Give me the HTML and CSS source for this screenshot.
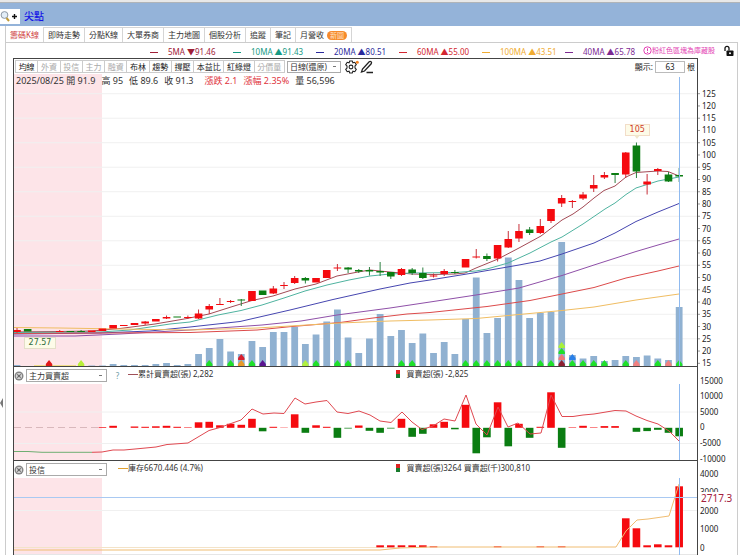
FILE: index.html
```html
<!DOCTYPE html>
<html lang="zh-Hant">
<head>
    <meta charset="UTF-8">
    <meta name="viewport" content="width=device-width, initial-scale=1.0">
    <title>尖點 籌碼K線</title>
    <link rel="stylesheet" href="styles.css">
</head>
<body>
    <header class="title-bar">
        <button class="search-btn" type="button" aria-label="搜尋">
            <svg width="20" height="15" viewBox="0 0 20 15">
                <circle cx="4.5" cy="6" r="3.4" fill="#e3eef8" stroke="#8d98a5"/>
                <path d="M6.5 9l2.5 3" stroke="#c09a35" stroke-width="2"/>
                <path d="M12 7.5h5M14.500 5v5" stroke="#111" stroke-width="1.4"/>
            </svg>
        </button>
        <h1>尖點</h1>
    </header>

    <div class="main">
        <button class="side-handle" type="button" aria-label="展開側欄"></button>
        <div class="content">
            <nav class="tabs">
                <a href="#" class="active">籌碼K線</a>
                <a href="#">即時走勢</a>
                <a href="#">分點K線</a>
                <a href="#">大單券商</a>
                <a href="#">主力地圖</a>
                <a href="#">個股分析</a>
                <a href="#">追蹤</a>
                <a href="#">筆記</a>
                <a href="#">月營收<span class="badge">新圖</span></a>
            </nav>

            <div class="workspace">
                <div class="ma-row">
                    <div class="ma-list">
                        <span class="ma ma5"><i></i>5MA ▼91.46</span>
                        <span class="ma ma10"><i></i>10MA ▲91.43</span>
                        <span class="ma ma20"><i></i>20MA ▲80.51</span>
                        <span class="ma ma60"><i></i>60MA ▲55.00</span>
                        <span class="ma ma100"><i></i>100MA ▲43.51</span>
                        <span class="ma ma40"><i></i>40MA ▲65.78</span>
                    </div>
                    <span class="note">
                        <svg width="9" height="9" viewBox="0 0 9 9"><circle cx="4.500" cy="4.500" r="3.7" fill="none" stroke="#e33fb4"/><path d="M4.500 2.300v2.700M4.500 6v1" stroke="#e33fb4"/></svg>粉紅色區塊為庫藏股
                    </span>
                    <button class="lock" type="button" aria-label="鎖定">
                        <svg width="11" height="12" viewBox="0 0 11 12"><path d="M2 6V3.300a2 2 0 0 1 4 0V5.500" fill="none" stroke="#111" stroke-width="1.300"/><rect x="3.500" y="5.500" width="7" height="5.500" rx=".8" fill="#111"/><circle cx="7" cy="8.200" r="1" fill="#fff"/></svg>
                    </button>
                </div>

                <section class="panel price">
                    <div class="plot">
                        <svg id="priceChart" class="chart" viewBox="14 59 683 307" preserveAspectRatio="none"></svg>
                        <div class="overlay">
                            <div class="toolbar">
                                <div class="tools">
                                    <button type="button">均線</button>
                                    <button type="button" class="off">外資</button>
                                    <button type="button" class="off">投信</button>
                                    <button type="button" class="off">主力</button>
                                    <button type="button" class="off">融資</button>
                                    <button type="button">布林</button>
                                    <button type="button">趨勢</button>
                                    <button type="button">撐壓</button>
                                    <button type="button">本益比</button>
                                    <button type="button">紅綠燈</button>
                                    <button type="button" class="off">分價量</button>
                                </div>
                                <select class="period" aria-label="週期"><option>日線(還原)</option></select>
                                <button class="icon-btn" type="button" aria-label="設定">
                                    <svg width="15" height="14" viewBox="0 0 15 14">
                                        <path d="M5.700 1h2.600l.6 1.800 1.900-.5 1.500 2.300-1.300 1.400v2l1.300 1.400-1.500 2.300-1.900-.5-.6 1.800H5.700l-.6-1.800-1.900.5-1.500-2.300L3 8V6L1.700 4.600l1.500-2.300 1.900.5z" fill="none" stroke="#222" stroke-width="1.100"/>
                                        <circle cx="7" cy="7" r="1.900" fill="none" stroke="#222" stroke-width="1.100"/>
                                        <circle cx="13.300" cy="2.300" r="1.500" fill="#f58220"/>
                                    </svg>
                                </button>
                                <button class="icon-btn" type="button" aria-label="畫線">
                                    <svg width="14" height="14" viewBox="0 0 14 14"><path d="M1.500 12l1-3 6.700-7.200q1-.8 1.900 0t.1 2L4.500 11zM6.500 12.500H13" fill="none" stroke="#222" stroke-width="1.300"/></svg>
                                </button>
                                <label class="count">顯示:<input type="text" value="63">根</label>
                            </div>
                            <p class="quote">
                                <span>2025/08/25 開 91.9</span><span>高 95</span><span>低 89.6</span><span>收 91.3</span>
                                <span class="up gap">漲跌 2.1</span><span class="up">漲幅 2.35%</span><span>量 56,596</span>
                            </p>
                        </div>
                        <span class="tip tip-low">27.57</span>
                        <span class="tip tip-high">105</span>
                    </div>
                    <svg id="priceAxis" class="axis" width="39" height="307" viewBox="698 59 39 307"></svg>
                </section>

                <section class="panel flow">
                    <div class="plot">
                        <svg id="flowChart" class="chart" viewBox="14 367 683 93" preserveAspectRatio="none"></svg>
                        <div class="overlay panel-head">
                            <div class="head-left">
                                <button class="close" type="button" aria-label="關閉"><svg width="10" height="10" viewBox="0 0 10 10"><circle cx="5" cy="5" r="4.500" fill="#858585"/><circle cx="5" cy="5" r="3" fill="#ddd"/><path d="M3.300 3.300l3.400 3.400M6.700 3.300L3.300 6.700" stroke="#666" stroke-width="1.200"/></svg></button>
                                <select aria-label="指標"><option>主力買賣超</option></select>
                                <a href="#" class="help">?</a>
                                <span class="legend"><i class="line red"></i>累計買賣超(張) 2,282</span>
                            </div>
                            <span class="legend"><i class="box"></i>買賣超(張) -2,825</span>
                        </div>
                    </div>
                    <svg id="flowAxis" class="axis" width="39" height="93" viewBox="698 367 39 93"></svg>
                </section>

                <section class="panel trust">
                    <div class="plot">
                        <svg id="trustChart" class="chart" viewBox="14 461 683 94" preserveAspectRatio="none"></svg>
                        <div class="overlay panel-head">
                            <div class="head-left">
                                <button class="close" type="button" aria-label="關閉"><svg width="10" height="10" viewBox="0 0 10 10"><circle cx="5" cy="5" r="4.500" fill="#858585"/><circle cx="5" cy="5" r="3" fill="#ddd"/><path d="M3.300 3.300l3.400 3.400M6.700 3.300L3.300 6.700" stroke="#666" stroke-width="1.200"/></svg></button>
                                <select aria-label="指標"><option>投信</option></select>
                                <span class="legend"><i class="line orange"></i>庫存6670.446 (4.7%)</span>
                            </div>
                            <span class="legend"><i class="box"></i>買賣超(張)3264 買賣超(千)300,810</span>
                        </div>
                    </div>
                    <svg id="trustAxis" class="axis" width="39" height="94" viewBox="698 461 39 94"></svg>
                </section>
            </div>
        </div>
    </div>

    <script src="chart.js"></script>
</body>
</html>
```

FILE: styles.css
```css
* {
    box-sizing: border-box;
}
body {
    margin: 0;
    background: #fff;
    color: #333;
    font-family: "Noto Sans", "Noto Sans CJK TC", sans-serif;
    font-size: 8px;
    line-height: 12px;
}
button, select, input {
    font: inherit;
    color: inherit;
    margin: 0;
    padding: 0;
    border: 0;
    background: none;
    border-radius: 0;
}
svg {
    display: block;
}
a {
    color: inherit;
    text-decoration: none;
}

/* title */
.title-bar {
    display: flex;
    align-items: center;
    height: 26px;
    padding-top: 4px;
    background: #94b3d9;
    border-top: 2px solid #e8e8e8;
    box-shadow: inset 0 1px 0 #b0b4b8;
}
.search-btn {
    background: #fff;
}
.title-bar h1 {
    margin: 0 0 0 4px;
    font-size: 10px;
    line-height: 14px;
    font-weight: 500;
    color: #1212e6;
}

/* frame */
.main {
    display: flex;
}
.side-handle {
    flex: 0 0 5px;
    display: flex;
    align-items: center;
    padding-top: 225px;
}
.side-handle::before {
    content: "";
    border: 5px solid transparent;
    border-left: 0;
    border-right: 3px solid #777;
}
.content {
    flex: 1;
    min-width: 0;
    margin-right: 2px;
}
.tabs {
    display: flex;
    height: 16px;
    border-left: 1px solid #ccc;
}
.tabs a {
    display: flex;
    align-items: center;
    gap: 3px;
    padding: 0 4px;
    margin-top: 1px;
    border: 1px solid #d5d5d5;
    border-width: 1px 1px 0 0;
}
.tabs .active {
    color: #cf4444;
    border-top: 0;
}
.badge {
    padding: 0 3px;
    border-radius: 5px;
    background: #f68a2c;
    color: #ffe3c4;
    font-size: 7px;
    line-height: 9px;
}
.workspace {
    border: 1px solid #ccc;
    border-bottom: 0;
    padding-left: 7px;
}

/* moving averages */
.ma-row {
    display: flex;
    align-items: center;
    height: 15px;
    padding-right: 3px;
}
.ma-list {
    flex: 1;
    display: flex;
    justify-content: flex-end;
}
.ma {
    flex: 0 0 83px;
    display: flex;
    align-items: center;
    gap: 10px;
    padding-top: 3px;
    white-space: nowrap;
}
.ma:last-child {
    flex-basis: 78px;
}
.ma i {
    width: 8px;
    border-top: 1px solid;
}
.ma5 { color: #a02037; }
.ma10 { color: #169a84; }
.ma20 { color: #2a2a9c; }
.ma60 { color: #d22630; }
.ma100 { color: #f0ac32; }
.ma40 { color: #7d2a92; }
.note {
    display: flex;
    align-items: center;
    font-size: 7px;
    color: #e33fb4;
}
.lock {
    margin-left: 8px;
}

/* panels */
.panel {
    display: flex;
}
.plot {
    position: relative;
    flex: 1;
    min-width: 0;
    display: grid;
    border: 1px solid #444;
    border-top: 0;
}
.price .plot {
    border-top: 1px solid #444;
}
.price .axis {
    margin-top: 1px;
}
.trust .plot {
    border-bottom: 0;
}
.chart, .overlay {
    grid-area: 1 / 1;
}
.chart {
    width: 100%;
}
.price .chart { height: 307px; }
.flow .chart { height: 93px; }
.trust .chart { height: 94px; }
.overlay {
    align-self: start;
    z-index: 1;
}
.axis {
    flex: none;
    overflow: visible;
    font-size: 8px;
    fill: #222;
}
.axis .cursor {
    font-size: 10px;
    fill: #a3203c;
}

/* toolbar */
.toolbar {
    display: flex;
    align-items: center;
    height: 15px;
    padding-left: 1px;
    background: #fff;
}
.tools {
    display: flex;
    flex: 0 0 270px;
    border-left: 1px solid #ccc;
}
.tools button {
    flex: 1 1 auto;
    border: 1px solid #ccc;
    border-left: 0;
    line-height: 11px;
    color: #222;
    white-space: nowrap;
}
.tools .off {
    color: #aaa;
}
select {
    appearance: none;
    height: 13px;
    padding: 0 12px 0 2px;
    border: 1px solid #aaa;
    background: linear-gradient(#777, #777) no-repeat right 4px center / 3px 1px, #fff;
}
.period {
    width: 54px;
    height: 12px;
    line-height: 10px;
    margin: 0 3px 0 2px;
}
.icon-btn {
    margin-right: 1px;
}
.count {
    display: flex;
    align-items: center;
    gap: 2px;
    margin-left: auto;
    padding-right: 2px;
    color: #222;
}
.count input {
    width: 30px;
    height: 12px;
    border: 1px solid #bbb;
    text-align: center;
}
.quote {
    display: flex;
    gap: 6px;
    margin: 0;
    padding-left: 2px;
    font-size: 9px;
    line-height: 14px;
}
.quote .gap {
    margin-left: 5px;
}
.up {
    color: #e0343c;
}

/* price tips */
.tip {
    position: absolute;
    padding: 0 4px;
    border: 1px solid #e4dfc8;
    background: #fdfbe8;
    font-family: "DejaVu Sans", sans-serif;
    font-size: 8px;
    line-height: 10px;
}
.tip-low {
    left: 1.4%;
    bottom: 17px;
    color: #2f6b3a;
}
.tip-high {
    left: 89.4%;
    top: 65px;
    color: #cf3a2c;
    border-color: #f2ddc8;
}
.tip-high::after {
    content: "";
    position: absolute;
    top: 100%;
    left: 50%;
    margin-left: -3px;
    border: 3px solid transparent;
    border-top: 4px solid #f0e6cc;
    border-bottom: 0;
}

/* indicator headers */
.panel-head {
    display: flex;
    align-items: center;
    width: 100%;
    height: 17px;
    background: #fff;
}
.head-left {
    flex: 0 0 56%;
    display: flex;
    align-items: center;
}
.close {
    margin: 0 2px 0 0;
}
.head-left select {
    width: 81px;
}
.help {
    width: 21px;
    text-align: center;
    color: #6b9aa5;
}
.legend {
    display: flex;
    align-items: center;
    padding-bottom: 3px;
    white-space: nowrap;
    line-height: 12px;
}
.trust .head-left .legend {
    margin-left: 11px;
}
.line {
    width: 10px;
    border-top: 1px solid #a05058;
}
.line.orange {
    border-color: #e0a030;
}
.box {
    width: 4px;
    height: 8px;
    margin-right: 6px;
    background: linear-gradient(#d22 50%, #187a2c 50%);
}
```

FILE: chart.js
```js
const RED = "#f50a0f";
const GREEN = "#0b7d12";
const CURSOR = "#8fbaf0";
const STEP = 10.68;
const xAt = i => 17 + i * STEP;

// color, body top, body bottom, wick top, wick bottom
const candles = [
    "r 330 332 328 333", "g 329 331.5", "", "", "r 331 332 330 332", "g 331 332", "g 331 332 330 332",
    "r 330.5 332", "r 328.5 331", "r 325 328.5", "r 325 326", "r 323 325", "r 321.5 323.5 321 325",
    "r 319 321.5", "r 317 318.5 315.5 319", "g 316.5 317.5", "r 317 318 315.5 319", "r 313.5 318.5 309.5 319",
    "r 306 309.5 304 314", "r 304 305 298 305", "r 301 302 300 303", "g 299.5 300.5 299 306", "r 291 301",
    "g 290.5 295", "r 288.5 293.5 286 294", "r 285 286 282 289", "r 278 283 276 284", "g 278 280.5 277 283.5",
    "r 278 282.5", "r 270 278", "r 267.5 268.5 264 271", "g 267.5 269.5 267 273", "g 270 271.5 269 273",
    "g 270 271.5 267 275.5", "g 271 272.5 262 276", "g 272 276.5 272 279", "r 269 275 268 276",
    "g 269.5 273 268 275", "g 273 278 267.5 279", "r 275.5 276.5 273.5 277.5", "r 271 274 269 276",
    "g 272 273 270 274", "r 259 267.5", "r 256.5 257.5 249 258.5", "g 256 259 253.5 261",
    "r 245 258.5 245 261.5", "r 239 247.5 231 248", "r 231 238.5 224 242", "g 229.5 233 227 235",
    "r 226 233 219 234", "r 209 221 209 223", "r 198 203.5 195 207", "r 201 202 200 208",
    "r 194.5 198.5 192 200", "r 185 188.5 175 192", "r 175 177.5 172 179", "g 173 175 173 183",
    "r 152.5 174.5 152 178", "g 145.5 171.5 142.5 178", "r 181.5 184.5 174 194.5", "r 169 171 168 175",
    "g 174.5 181.5 172 182", "g 175 176.5 168 182"
];

const volume = [1, 0, 0, 0, 0, 0, 0, 0.5, 0.5, 2, 1, 1, 1, 2, 3, 1, 2, 12, 18, 27, 14.5, 12, 25, 19, 34, 34, 39,
    22, 31.5, 44.5, 56.5, 28.5, 13, 27.5, 52, 30, 36, 23, 32.5, 13, 24, 12, 47, 88.5, 33, 48, 108.5, 86, 48,
    53, 54, 124, 11, 7.5, 10, 5, 6, 10, 9, 10.5, 7.5, 6, 59];

const averages = {
    "#a34a55": "14,332 60,331.5 92,331 120,328.5 155,324 187,318.5 209,314 231,307 252,300.5 273,296 295,289 316,284 337,276 358,272 370,270 390,272 412,274 433,274.5 455,274 465,273 476,268 498,259 519,248 541,236 562,220 573,214 583,207 594,198 604,190.5 615,186 626,177 636,172.5 658,171 668,171.5 679,176",
    "#4fb3a0": "14,332.5 100,332 130,330 170,324 190,322 218,315 241,310.5 262,305 284,298 305,291 327,285 349,280 370,276 390,274 412,273 455,272.5 476,271 487,269 508,263 530,253 551,242 562,237 583,224 605,209 615,203 626,194.5 636,188 658,181 679,177",
    "#4646b0": "14,334 100,333 150,331 190,327 240,321.500 290,310 333,299.500 380,289 410,283 430,280 473,273 519,265 540,261 562,254 594,243 615,233 636,221.5 658,212 679,203.5",
    "#8f50a8": "14,336 75,336 120,334 190,330 262,325 301,321 337,315 390,308 430,302 476,295 519,288 562,275.5 594,265 636,251.5 658,245 679,239",
    "#dc4a4a": "14,333.5 190,332.5 257,330 290,326.700 340,322.500 373,318 407,314 430,312.5 487,306.5 530,300.5 562,294 594,287.5 626,278 658,271 679,266",
    "#f0bd62": "14,327.5 60,328 120,329 190,330 257,328 290,326 340,323 390,321 430,320 476,318.5 519,314.5 562,310.5 594,307 636,300 679,294"
};

// signal marks under the bars: index, level, colour
const marks = [[3, 0, "#e01818"], [6, 0, "#b8ee38"], [21, 1, "#d81e2c"], [21, 0, "#e89a28"], [23, 0, "#5a1590"],
    [27, 0, "#b0f040"], [51, 3, "#a8f03a"], [51, 2, "#1fe02a"], [51, 1, "#f07878"], [51, 0, "#8c2030"],
    [52, 1, "#2a80e8"], [58, 0, "#f08080"], [61, 0, "#f08080"]];
[18, 20, 22, 28, 30, 31, 36, 37, 42, 43, 44, 45, 46, 47, 49, 50, 52, 53, 54, 55, 57, 60, 62]
    .forEach(i => marks.push([i, 0, "#1fe02a"]));

const flow = [0, 0, 0, 0, 0, 0, 0, 0, .7, 2, 0, 1.3, 1, 1.5, 2, 1, .5, 5.5, 6, 2.5, 4, 3, 9, -3.5, 1, .3, 13.5, -5,
    2.5, 1, -10, -.7, 2.3, -3, -5, -.7, 9, -9, -6, 3.5, 6, -1.5, 23, -25.5, -9.5, 25.5, -18.5, 4, -10, 1, 35.5,
    -20, .5, 2, .5, 1.7, 1.7, 0, -4, -3.3, -2, -5, -8.5];
const flowLine = "92,452.3 102,452 113,450 124,450 135,449 156,447 167,444.5 188,443 209,430.5 220,427.5 231,423.5 241,420 252,409 263,414 274,413 284,413.5 295,398 305,404 316,402 327,400.5 337,412 348,413.5 359,411 370,415 380,421 391,422.5 402,412 412,422 422,429.5 433,426 444,419 455,421 466,395 476,424 487,435 498,407 508,427 518,423 530,434 541,433 551,395 562,416.5 573,416.5 583,415 594,414 615,410.5 626,411 636,416 647,420.5 658,424 669,431 679,441";

const trust = { 34: 2, 35: 2, 36: 2, 37: 2, 38: 2, 39: 1, 45: 1, 49: 1, 51: 1, 57: 29, 58: 19, 59: 2, 60: 3, 61: 2, 62: 61 };
const trustLine = "14,550 380,550 400,548 430,547 616,547 626,531 637,520 648,519 669,516 679,484";

const rect = (x, y, w, h, fill) => `<rect x="${x}" y="${y}" width="${w}" height="${h}" fill="${fill}"/>`;
const line = (x1, y1, x2, y2, color) => `<path d="M${x1} ${y1}L${x2} ${y2}" stroke="${color}"/>`;
const poly = (points, color) => `<polyline points="${points}" fill="none" stroke="${color}"/>`;
const draw = (id, html) => document.getElementById(id).innerHTML = html;

function bar(i, h, zero) {
    return h ? rect(xAt(i) - 3.8, h > 0 ? zero - h : zero, 7.6, Math.abs(h), h > 0 ? RED : GREEN) : "";
}

function drawPrice() {
    const yAt = p => 93.7 + (125 - p) * 2.451;
    let out = rect(14, 72, 88, 294, "#fde4e8");
    for (let p = 125; p > 20; p -= 10) out += line(14, yAt(p), 697, yAt(p), "#f0f0f0");
    volume.forEach((v, i) => out += rect(xAt(i) - 3.4, 366 - v, 6.8, v, "#90b1d1"));
    out += rect(34, 365, 42, 1, "#f3df8a");
    for (const color in averages) out += poly(averages[color], color);
    candles.forEach((row, i) => {
        if (!row) return;
        const [c, top, bottom, high, low] = row.split(" ");
        const color = c === "r" ? RED : GREEN;
        if (high) out += line(xAt(i), high, xAt(i), low, c === "r" ? "#c8303a" : "#2c8040");
        out += rect(xAt(i) - 3.8, top, 7.6, bottom - top, color);
    });
    marks.forEach(([i, level, color]) => {
        const x = xAt(i), y = 366 - level * 6;
        out += `<path d="M${x - 3.2} ${y}v-2l3.200 -4l3.200 4v2z" fill="${color}"/>`;
    });
    out += line(679.5, 77, 679.5, 366, CURSOR);
    draw("priceChart", out);

    let labels = "";
    for (let p = 125; p >= 15; p -= 5) {
        labels += line(698, yAt(p), 700, yAt(p), "#999") + `<text x="702" y="${yAt(p) + 3}">${p}</text>`;
    }
    draw("priceAxis", labels);
}

function drawFlow() {
    let out = rect(14, 383, 88, 77, "#fde4e8");
    [412, 443.5].forEach(y => out += line(14, y, 697, y, "#f0f0f0"));
    out += `<path d="M14 427.500H102" stroke="#d9b8bc" stroke-dasharray="7 4"/>`;
    flow.forEach((v, i) => out += bar(i, v, 427.8));
    out += poly("14,451.5 28,451.5 42,452.3 92,452.3", "#6fae72") + poly(flowLine, "#e04850");
    out += line(679.5, 367, 679.5, 460, CURSOR);
    draw("flowChart", out);
    draw("flowAxis", [15000, 10000, 5000, 0, -5000, -10000]
        .map((v, i) => `<text x="700" y="${383.5 + i * 15.6}">${v}</text>`).join(""));
}

function drawTrust() {
    let out = rect(14, 477, 88, 78, "#fde4e8");
    out += line(14, 510.5, 697, 510.5, "#f0f0f0") + line(14, 554.5, 697, 554.5, "#e6e6e6");
    out += line(14, 547.5, 400, 547.5, "#f3e3c8");
    for (const i in trust) out += bar(+i, trust[i], 547.3);
    out += poly(trustLine, "#f0bd72");
    out += line(14, 497.5, 697, 497.5, "#a9c9f2") + line(679.5, 461, 679.5, 555, CURSOR);
    draw("trustChart", out);
    // the cursor value sits on top of the scale and hides part of a label
    draw("trustAxis", [4000, 3000, 2000, 1000, 0]
        .map((v, i) => `<text x="700" y="${476.5 + i * 18.5}">${v}</text>`).join("")
        + rect(699, 492, 35, 13, "#fff") + `<text class="cursor" x="701" y="502">2717.3</text>`);
}

drawPrice();
drawFlow();
drawTrust();
```
